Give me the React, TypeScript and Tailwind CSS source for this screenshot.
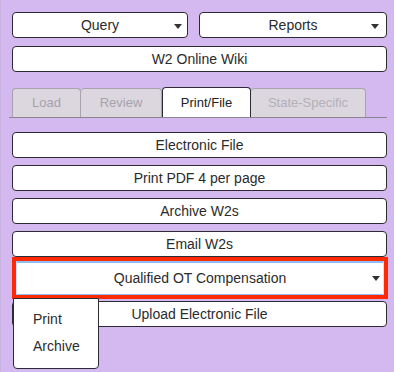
import React from "react";

const Caret = () => (
  <svg width="8" height="5" viewBox="0 0 8 5" className="block">
    <path d="M0 0 L8 0 L4 5 Z" fill="#333" />
  </svg>
);

const Btn = ({ children }: { children: React.ReactNode }) => (
  <div className="h-[26px] flex items-center justify-center rounded-[4px] border border-[#2e2a33] bg-white text-[14px] text-[#2b2b2b]">
    {children}
  </div>
);

export default function App() {
  return (
    <div
      className="relative w-[394px] h-[372px] bg-[#d4b9f1] border-l border-[#c9b3e0] pl-[11px] pr-[7px] pt-[12px] text-[#2b2b2b]"
      style={{ fontFamily: '"Liberation Sans", Arial, sans-serif' }}
    >
      <div className="flex gap-[11px]">
        <div className="w-[176px] h-[26px] relative flex items-center justify-center rounded-[4px] border border-[#2e2a33] bg-white text-[14px]">
          Query
          <span className="absolute right-[5px] top-[11px]"><Caret /></span>
        </div>
        <div className="flex-1 h-[26px] relative flex items-center justify-center rounded-[4px] border border-[#2e2a33] bg-white text-[14px]">
          Reports
          <span className="absolute right-[7px] top-[11px]"><Caret /></span>
        </div>
      </div>
      <div className="mt-[8px]">
        <Btn>W2 Online Wiki</Btn>
      </div>

      <div className="mt-[15px] -ml-[3px] border-b border-[#8a8590] flex items-end h-[31px] pl-[3px]">
        <div className="w-[69px] h-[29px] flex items-center justify-center rounded-t-[4px] border border-b-0 border-[#a7a2ab] bg-[#dcd7df] text-[13px] text-[#a6a2aa]">Load</div>
        <div className="w-[81px] h-[29px] flex items-center justify-center rounded-t-[4px] border border-b-0 border-l-0 border-[#a7a2ab] bg-[#dcd7df] text-[13px] text-[#a6a2aa]">Review</div>
        <div className="w-[89px] h-[30px] flex items-center justify-center rounded-t-[4px] border border-b-0 border-[#2e2a33] bg-white text-[13px] text-[#222]">Print/File</div>
        <div className="w-[115px] h-[29px] flex items-center justify-center rounded-t-[4px] border border-b-0 border-l-0 border-[#a7a2ab] bg-[#dcd7df] text-[13px] text-[#b3afb7]">State-Specific</div>
      </div>

      <div className="mt-[14px] flex flex-col gap-[7px]">
        <Btn>Electronic File</Btn>
        <Btn>Print PDF 4 per page</Btn>
        <Btn>Archive W2s</Btn>
        <Btn>Email W2s</Btn>
      </div>

      <div className="-mr-[1px] h-[42px] border-[4px] border-[#fe2a05] bg-white">
        <div className="relative h-full flex items-center justify-center border-t-[2px] border-b border-x border-[#8dbdf0] border-x-[#cfe2f8] text-[14px]">
          Qualified OT Compensation
          <span className="absolute right-[3px] top-[13px]"><Caret /></span>
        </div>
      </div>

      <div className="mt-[2px]">
        <Btn>Upload Electronic File</Btn>
      </div>

      <div className="absolute left-[12px] top-[298px] w-[86px] h-[71px] bg-white border border-[#2e2a33] rounded-b-[4px] text-[14px] text-[#2b2b2b] pl-[19px] pt-[12px] flex flex-col gap-[10px] leading-[17px]">
        <div>Print</div>
        <div>Archive</div>
      </div>
    </div>
  );
}
